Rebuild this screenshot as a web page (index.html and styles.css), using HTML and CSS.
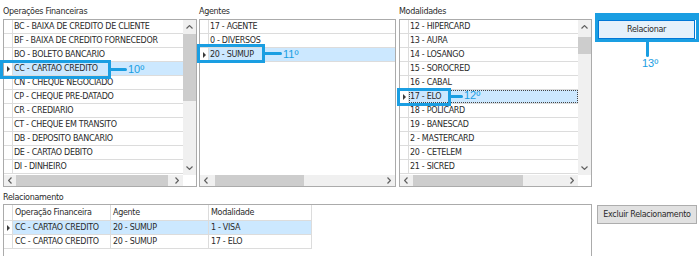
FILE: index.html
```html
<!DOCTYPE html>
<html lang="pt">
<head>
<meta charset="utf-8">
<link rel="stylesheet" href="styles.css">
</head>
<body>
<div class="page">
  <div class="top">
    <section class="panel p-ops">
      <div class="label">Operações Financeiras</div>
      <div class="grid">
        <div class="gbody">
          <div class="rows">
            <div class="row"><span class="ind"></span><span class="cell">BC - BAIXA DE CREDITO DE CLIENTE</span></div>
            <div class="row"><span class="ind"></span><span class="cell">BF - BAIXA DE CREDITO FORNECEDOR</span></div>
            <div class="row"><span class="ind"></span><span class="cell">BO - BOLETO BANCARIO</span></div>
            <div class="row sel"><span class="ind"><svg class="tri" width="3" height="6" viewBox="0 0 3 6"><path d="M0 0L3 3L0 6Z"/></svg></span><span class="cell">CC - CARTAO CREDITO</span></div>
            <div class="row"><span class="ind"></span><span class="cell">CN - CHEQUE NEGOCIADO</span></div>
            <div class="row"><span class="ind"></span><span class="cell">CP - CHEQUE PRE-DATADO</span></div>
            <div class="row"><span class="ind"></span><span class="cell">CR - CREDIARIO</span></div>
            <div class="row"><span class="ind"></span><span class="cell">CT - CHEQUE EM TRANSITO</span></div>
            <div class="row"><span class="ind"></span><span class="cell">DB - DEPOSITO BANCARIO</span></div>
            <div class="row"><span class="ind"></span><span class="cell">DE - CARTAO DEBITO</span></div>
            <div class="row"><span class="ind"></span><span class="cell">DI - DINHEIRO</span></div>
          </div>
          <div class="vscroll">
            <span class="sarrow"><svg width="7" height="4" viewBox="0 0 7 4"><path d="M0.5 3.5L3.5 0.6L6.5 3.5"/></svg></span>
            <div class="vtrack"><div class="vthumb vt-ops"></div></div>
            <span class="sarrow"><svg width="7" height="4" viewBox="0 0 7 4"><path d="M0.5 0.5L3.5 3.4L6.5 0.5"/></svg></span>
          </div>
        </div>
        <div class="hscroll">
          <span class="harrow"><svg width="4" height="7" viewBox="0 0 4 7"><path d="M3.5 0.5L0.6 3.5L3.5 6.5"/></svg></span>
          <div class="htrack"><div class="hthumb ht-ops"></div></div>
          <span class="harrow"><svg width="4" height="7" viewBox="0 0 4 7"><path d="M0.5 0.5L3.4 3.5L0.5 6.5"/></svg></span>
          <span class="corner"></span>
        </div>
      </div>
    </section>

    <section class="panel p-age">
      <div class="label">Agentes</div>
      <div class="grid">
        <div class="gbody">
          <div class="rows">
            <div class="row"><span class="ind"></span><span class="cell">17 - AGENTE</span></div>
            <div class="row"><span class="ind"></span><span class="cell">0 - DIVERSOS</span></div>
            <div class="row sel"><span class="ind"><svg class="tri" width="3" height="6" viewBox="0 0 3 6"><path d="M0 0L3 3L0 6Z"/></svg></span><span class="cell">20 - SUMUP</span></div>
          </div>
        </div>
        <div class="hscroll">
          <span class="harrow"><svg width="4" height="7" viewBox="0 0 4 7"><path d="M3.5 0.5L0.6 3.5L3.5 6.5"/></svg></span>
          <div class="htrack"><div class="hthumb ht-age"></div></div>
          <span class="harrow"><svg width="4" height="7" viewBox="0 0 4 7"><path d="M0.5 0.5L3.4 3.5L0.5 6.5"/></svg></span>
        </div>
      </div>
    </section>

    <section class="panel p-mod">
      <div class="label">Modalidades</div>
      <div class="grid">
        <div class="gbody">
          <div class="rows">
            <div class="row"><span class="ind"></span><span class="cell">12 - HIPERCARD</span></div>
            <div class="row"><span class="ind"></span><span class="cell">13 - AURA</span></div>
            <div class="row"><span class="ind"></span><span class="cell">14 - LOSANGO</span></div>
            <div class="row"><span class="ind"></span><span class="cell">15 - SOROCRED</span></div>
            <div class="row"><span class="ind"></span><span class="cell">16 - CABAL</span></div>
            <div class="row sel focus"><span class="ind"><svg class="tri" width="3" height="6" viewBox="0 0 3 6"><path d="M0 0L3 3L0 6Z"/></svg></span><span class="cell">17 - ELO</span></div>
            <div class="row"><span class="ind"></span><span class="cell">18 - POLICARD</span></div>
            <div class="row"><span class="ind"></span><span class="cell">19 - BANESCAD</span></div>
            <div class="row"><span class="ind"></span><span class="cell">2 - MASTERCARD</span></div>
            <div class="row"><span class="ind"></span><span class="cell">20 - CETELEM</span></div>
            <div class="row"><span class="ind"></span><span class="cell">21 - SICRED</span></div>
          </div>
          <div class="vscroll">
            <span class="sarrow"><svg width="7" height="4" viewBox="0 0 7 4"><path d="M0.5 3.5L3.5 0.6L6.5 3.5"/></svg></span>
            <div class="vtrack"><div class="vthumb vt-mod"></div></div>
            <span class="sarrow"><svg width="7" height="4" viewBox="0 0 7 4"><path d="M0.5 0.5L3.5 3.4L6.5 0.5"/></svg></span>
          </div>
        </div>
        <div class="hscroll">
          <span class="harrow"><svg width="4" height="7" viewBox="0 0 4 7"><path d="M3.5 0.5L0.6 3.5L3.5 6.5"/></svg></span>
          <div class="htrack"><div class="hthumb ht-mod"></div></div>
          <span class="harrow"><svg width="4" height="7" viewBox="0 0 4 7"><path d="M0.5 0.5L3.4 3.5L0.5 6.5"/></svg></span>
          <span class="corner"></span>
        </div>
      </div>
    </section>

    <div class="actions">
      <button class="btn btn-rel">Relacionar</button>
    </div>
  </div>

  <div class="bottom">
    <section class="bpanel">
      <div class="label blabel">Relacionamento</div>
      <div class="bgrid">
        <div class="trow thead"><span class="ind"></span><span class="tc c1">Operação Financeira</span><span class="tc c2">Agente</span><span class="tc c3">Modalidade</span></div>
        <div class="trow sel"><span class="ind"><svg class="tri" width="3" height="6" viewBox="0 0 3 6"><path d="M0 0L3 3L0 6Z"/></svg></span><span class="tc c1">CC - CARTAO CREDITO</span><span class="tc c2">20 - SUMUP</span><span class="tc c3">1 - VISA</span></div>
        <div class="trow"><span class="ind"></span><span class="tc c1">CC - CARTAO CREDITO</span><span class="tc c2">20 - SUMUP</span><span class="tc c3">17 - ELO</span></div>
      </div>
    </section>
    <div class="bactions">
      <button class="btn btn-exc">Excluir Relacionamento</button>
    </div>
  </div>

  <div class="ann-box a1"></div>
  <div class="ann-line l1"></div>
  <div class="ann-num n1">10º</div>

  <div class="ann-box a2"></div>
  <div class="ann-line l2"></div>
  <div class="ann-num n2">11º</div>

  <div class="ann-box a3"></div>
  <div class="ann-line l3"></div>
  <div class="ann-num n3">12º</div>

  <div class="ann-box a4"></div>
  <div class="ann-vline l4"></div>
  <div class="ann-num n4">13º</div>
</div>
</body>
</html>
```

FILE: styles.css
```css
body {
  margin: 0;
  background: #fff;
  color: #2a2a2a;
  font-family: "DejaVu Sans", sans-serif;
  font-size: 8px;
  letter-spacing: -0.3px;
  line-height: 13px;
}

.page {
  position: relative;
  width: 700px;
  height: 256px;
  overflow: hidden;
}

.top {
  display: flex;
  align-items: flex-start;
  padding: 4px 0 0 3px;
}

.label {
  height: 15px;
  line-height: 15px;
  white-space: nowrap;
}

.p-ops { width: 194px; }
.p-age { width: 197px; margin-left: 2px; }
.p-mod { width: 193px; margin-left: 3px; }

.grid {
  box-sizing: border-box;
  height: 168px;
  border: 1px solid #ababab;
  display: flex;
  flex-direction: column;
  background: #fff;
}

.gbody {
  display: flex;
  height: 155px;
  flex: none;
}

.rows {
  flex: 1;
  min-width: 0;
  overflow: hidden;
}

.row {
  display: flex;
  box-sizing: border-box;
  height: 14px;
  border-bottom: 1px solid #dcdcdc;
}

.ind {
  flex: none;
  box-sizing: border-box;
  width: 9px;
  border-right: 1px solid #dcdcdc;
  display: flex;
  align-items: center;
  justify-content: center;
}

.tri path { fill: #3a3a3a; }

.cell {
  flex: 1;
  padding-left: 1px;
  white-space: nowrap;
  overflow: hidden;
}

.row.sel .cell { background: #cce8ff; }
.row.focus .cell { outline: 1px dotted #444; outline-offset: -1px; }

.vscroll {
  flex: none;
  width: 13px;
  background: #f0f0f0;
  display: flex;
  flex-direction: column;
}

.sarrow {
  flex: none;
  height: 14px;
  display: flex;
  align-items: center;
  justify-content: center;
}

.sarrow path, .harrow path {
  fill: none;
  stroke: #606060;
  stroke-width: 1.2;
}

.vtrack { flex: 1; }
.vthumb { background: #cdcdcd; }
.vt-ops { height: 67px; }
.vt-mod { margin-top: 3px; height: 17px; }

.hscroll {
  flex: none;
  height: 11px;
  display: flex;
  background: #f0f0f0;
}

.harrow {
  flex: none;
  width: 12px;
  display: flex;
  align-items: center;
  justify-content: center;
}

.htrack { flex: 1; display: flex; }
.hthumb { background: #cdcdcd; height: 100%; }
.ht-ops { width: 152px; }
.ht-age { margin-left: 3px; width: 89px; }
.ht-mod { margin-left: 1px; width: 110px; }

.corner { flex: none; width: 13px; background: #fff; }

.actions {
  margin-left: 6px;
  padding-top: 16px;
}

.btn {
  font: inherit;
  letter-spacing: inherit;
  color: #2a2a2a;
  box-sizing: border-box;
  display: flex;
  align-items: center;
  justify-content: center;
  padding: 0;
  margin: 0;
}

.btn-rel {
  width: 97px;
  height: 19px;
  border: 1px solid #0078d7;
  background: #e5f1fb;
}

.bottom {
  display: flex;
  align-items: flex-start;
  padding: 5px 0 0 3px;
}

.blabel { height: 12px; line-height: 12px; }

.bgrid {
  box-sizing: border-box;
  width: 589px;
  height: 60px;
  border: 1px solid #ababab;
  background: #fff;
}

.trow {
  display: flex;
  width: 308px;
  box-sizing: border-box;
  height: 14px;
  border-bottom: 1px solid #dcdcdc;
}

.trow.thead { height: 16px; line-height: 15px; }

.tc {
  box-sizing: border-box;
  border-right: 1px solid #dcdcdc;
  padding-left: 2px;
  white-space: nowrap;
  overflow: hidden;
}

.c1 { width: 98px; }
.c2 { width: 98px; }
.c3 { width: 103px; }

.trow.sel .tc { background: #cce8ff; }

.bactions {
  margin-left: 5px;
  padding-top: 13px;
}

.btn-exc {
  width: 100px;
  height: 19px;
  border: 1px solid #adadad;
  background: #e1e1e1;
}

/* annotations overlay */
.ann-box {
  position: absolute;
  box-sizing: border-box;
  border: 3px solid #1a9ee2;
}

.ann-line {
  position: absolute;
  height: 3px;
  background: #1a9ee2;
  border-radius: 0 2px 2px 0;
}

.ann-vline {
  position: absolute;
  width: 3px;
  background: #1a9ee2;
  border-radius: 0 0 2px 2px;
}

.ann-num {
  position: absolute;
  font-family: "Liberation Sans", sans-serif;
  font-size: 11px;
  letter-spacing: 0;
  line-height: 12px;
  color: #1a9ee2;
  white-space: nowrap;
}

.a1 { left: 0; top: 60px; width: 111px; height: 19px; }
.l1 { left: 110px; top: 68px; width: 17px; }
.n1 { left: 128px; top: 63px; }

.a2 { left: 197px; top: 44px; width: 68px; height: 19px; }
.l2 { left: 264px; top: 52px; width: 18px; }
.n2 { left: 283px; top: 48px; }

.a3 { left: 397px; top: 88px; width: 54px; height: 18px; }
.l3 { left: 450px; top: 95px; width: 13px; }
.n3 { left: 464px; top: 89px; }

.a4 { left: 595px; top: 13px; width: 104px; height: 29px; border-top-width: 7px; }
.l4 { left: 646px; top: 42px; height: 15px; }
.n4 { left: 642px; top: 57px; }
```
